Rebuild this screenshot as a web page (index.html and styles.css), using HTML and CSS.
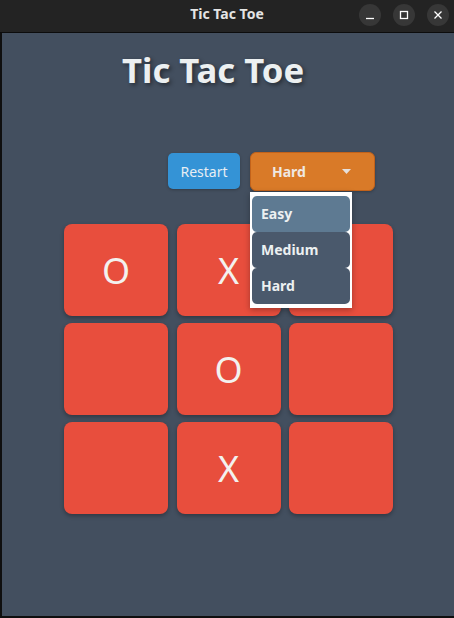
FILE: index.html
```html
<!DOCTYPE html>
<html>
<head>
<meta charset="utf-8">
<link rel="stylesheet" href="styles.css">
</head>
<body>
<div class="window">
  <div class="titlebar">
    <div class="title">Tic Tac Toe</div>
    <div class="wbtns">
      <span class="wbtn"><svg width="10" height="10" viewBox="0 0 10 10"><path d="M1 8.5h8" stroke="#fff" stroke-width="1.3"/></svg></span>
      <span class="wbtn"><svg width="10" height="10" viewBox="0 0 10 10"><rect x="1.5" y="1.5" width="7" height="7" fill="none" stroke="#fff" stroke-width="1.3"/></svg></span>
      <span class="wbtn"><svg width="10" height="10" viewBox="0 0 10 10"><path d="M1.5 1.5l7 7M8.5 1.5l-7 7" stroke="#fff" stroke-width="1.3"/></svg></span>
    </div>
  </div>
  <div class="content">
    <h1 class="heading">Tic Tac Toe</h1>
    <div class="controls">
      <button class="restart">Restart</button>
      <div class="select-wrap">
        <div class="select"><span>Hard</span><svg class="caret" width="9" height="5" viewBox="0 0 9 5"><path d="M0 0h9L4.5 5z" fill="#e6e0dc"/></svg></div>
        <div class="menu">
          <div class="opt sel">Easy</div>
          <div class="opt">Medium</div>
          <div class="opt">Hard</div>
        </div>
      </div>
    </div>
    <div class="board">
      <div class="cell">O</div>
      <div class="cell">X</div>
      <div class="cell"></div>
      <div class="cell"></div>
      <div class="cell">O</div>
      <div class="cell"></div>
      <div class="cell"></div>
      <div class="cell">X</div>
      <div class="cell"></div>
    </div>
  </div>
</div>
</body>
</html>
```
FILE: styles.css
```css
* { box-sizing: border-box; }
html, body { margin: 0; padding: 0; }
body { width: 454px; height: 618px; overflow: hidden; background: #111; font-family: "Noto Sans", "Open Sans", sans-serif; }
.window { width: 454px; height: 618px; background: #0f0f0f; display: flex; flex-direction: column; }
.titlebar { height: 33px; background: #232323; border-bottom: 1px solid #0c0c0c; position: relative; display: flex; align-items: center; justify-content: center; flex-shrink: 0; }
.title { color: #e4e4e4; font-weight: 700; font-size: 14px; margin-top: -5px; }
.wbtns { position: absolute; right: 5px; top: 4px; display: flex; gap: 12px; }
.wbtn { width: 22px; height: 22px; border-radius: 50%; background: #373737; display: flex; align-items: center; justify-content: center; }
.content { margin: 0 0 2px 2px; flex: 1; background: #434f5f; position: relative; }
.heading { margin: 0; padding: 14px 0 0 120px; font-size: 34.7px; font-weight: 700; color: #ecf0f1; line-height: 46px; text-shadow: 2px 2px 4px rgba(0,0,0,0.45); }
.controls { display: flex; align-items: center; gap: 10px; margin: 58px 0 0 166px; height: 40px; }
.restart { width: 72px; height: 36px; background: #3493d6; color: #e8eef3; border: none; border-radius: 5px; font-family: "Noto Sans", sans-serif; font-size: 14px; padding: 0; box-shadow: 0 1px 3px rgba(0,0,0,0.25); }
.select-wrap { position: relative; }
.select { width: 125px; height: 39px; background: #d97a28; border: 1px solid #c2621a; border-radius: 6px; display: flex; align-items: center; padding: 0 0 0 21px; color: #efe8e2; font-weight: 700; font-size: 14px; box-shadow: 0 1px 3px rgba(0,0,0,0.25); }
.select span { flex: 1; }
.caret { margin-right: 23px; }
.menu { position: absolute; left: 0; top: 40px; width: 102px; background: #fff; padding: 4px 2px 4px 2px; z-index: 5; box-shadow: 0 2px 6px rgba(0,0,0,0.3); }
.opt { height: 36px; border-radius: 5px; background: #4a596c; color: #ecf0f1; font-weight: 700; font-size: 14px; display: flex; align-items: center; padding-left: 9px; }
.sel { background: #5e7a92; }
.board { display: grid; grid-template-columns: repeat(3, 104px); grid-auto-rows: 92px; column-gap: 8.5px; row-gap: 7px; margin: 33px 0 0 62px; }
.cell { background: #e84e3d; border-radius: 8px; box-shadow: 0 2px 4px rgba(0,0,0,0.3); display: flex; align-items: center; justify-content: center; color: #f3f1ef; font-size: 36px; font-weight: 400; }
```
